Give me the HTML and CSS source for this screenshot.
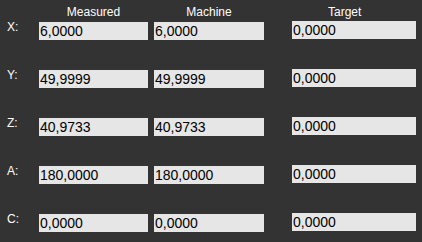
FILE: index.html
```html
<!DOCTYPE html>
<html lang="en">
<head>
    <meta charset="UTF-8">
    <title>Axis Positions</title>
    <link rel="stylesheet" href="styles.css">
</head>
<body>
    <!-- column titles -->
    <div class="axes axes-head">
        <div></div>
        <div class="head measured">Measured</div>
        <div class="head machine">Machine</div>
        <div class="head target">Target</div>
    </div>

    <!-- axis position rows -->
    <div class="axes axes-body">
        <div class="label">X:</div>
        <div class="value measured">6,0000</div>
        <div class="value machine">6,0000</div>
        <div class="value target">0,0000</div>

        <div class="label">Y:</div>
        <div class="value measured">49,9999</div>
        <div class="value machine">49,9999</div>
        <div class="value target">0,0000</div>

        <div class="label">Z:</div>
        <div class="value measured">40,9733</div>
        <div class="value machine">40,9733</div>
        <div class="value target">0,0000</div>

        <div class="label">A:</div>
        <div class="value measured">180,0000</div>
        <div class="value machine">180,0000</div>
        <div class="value target">0,0000</div>

        <div class="label">C:</div>
        <div class="value measured">0,0000</div>
        <div class="value machine">0,0000</div>
        <div class="value target">0,0000</div>
    </div>
</body>
</html>
```

FILE: styles.css
```css
body {
    margin: 0;
    background: #333333;
    font-family: "Liberation Sans", Arial, sans-serif;
    width: 422px;
    height: 242px;
    overflow: hidden;
}

.axes {
    display: grid;
    grid-template-columns: 39px 115px 138px 124px;
}

.axes-head {
    padding-top: 5px;
    margin-bottom: 3px;
}

.axes-body {
    grid-auto-rows: 18px;
    row-gap: 30px;
}

.head {
    color: #ffffff;
    font-size: 12px;
    line-height: 14px;
}

.head.measured {
    width: 109px;
    text-align: center;
}

.head.machine {
    width: 110px;
    text-align: center;
}

.head.target {
    padding-left: 36px;
}

.label {
    color: #ffffff;
    font-size: 12px;
    line-height: 12px;
    padding-left: 7px;
    margin-top: -1px;
}

.value {
    background: #e6e6e6;
    color: #000000;
    font-size: 14px;
    line-height: 18px;
    height: 18px;
    padding-left: 1px;
    box-sizing: border-box;
    white-space: nowrap;
    overflow: hidden;
}

.value.measured {
    width: 109px;
}

.value.machine {
    width: 110px;
}

.value.target {
    width: 124px;
    margin-top: -1px;
}
```
